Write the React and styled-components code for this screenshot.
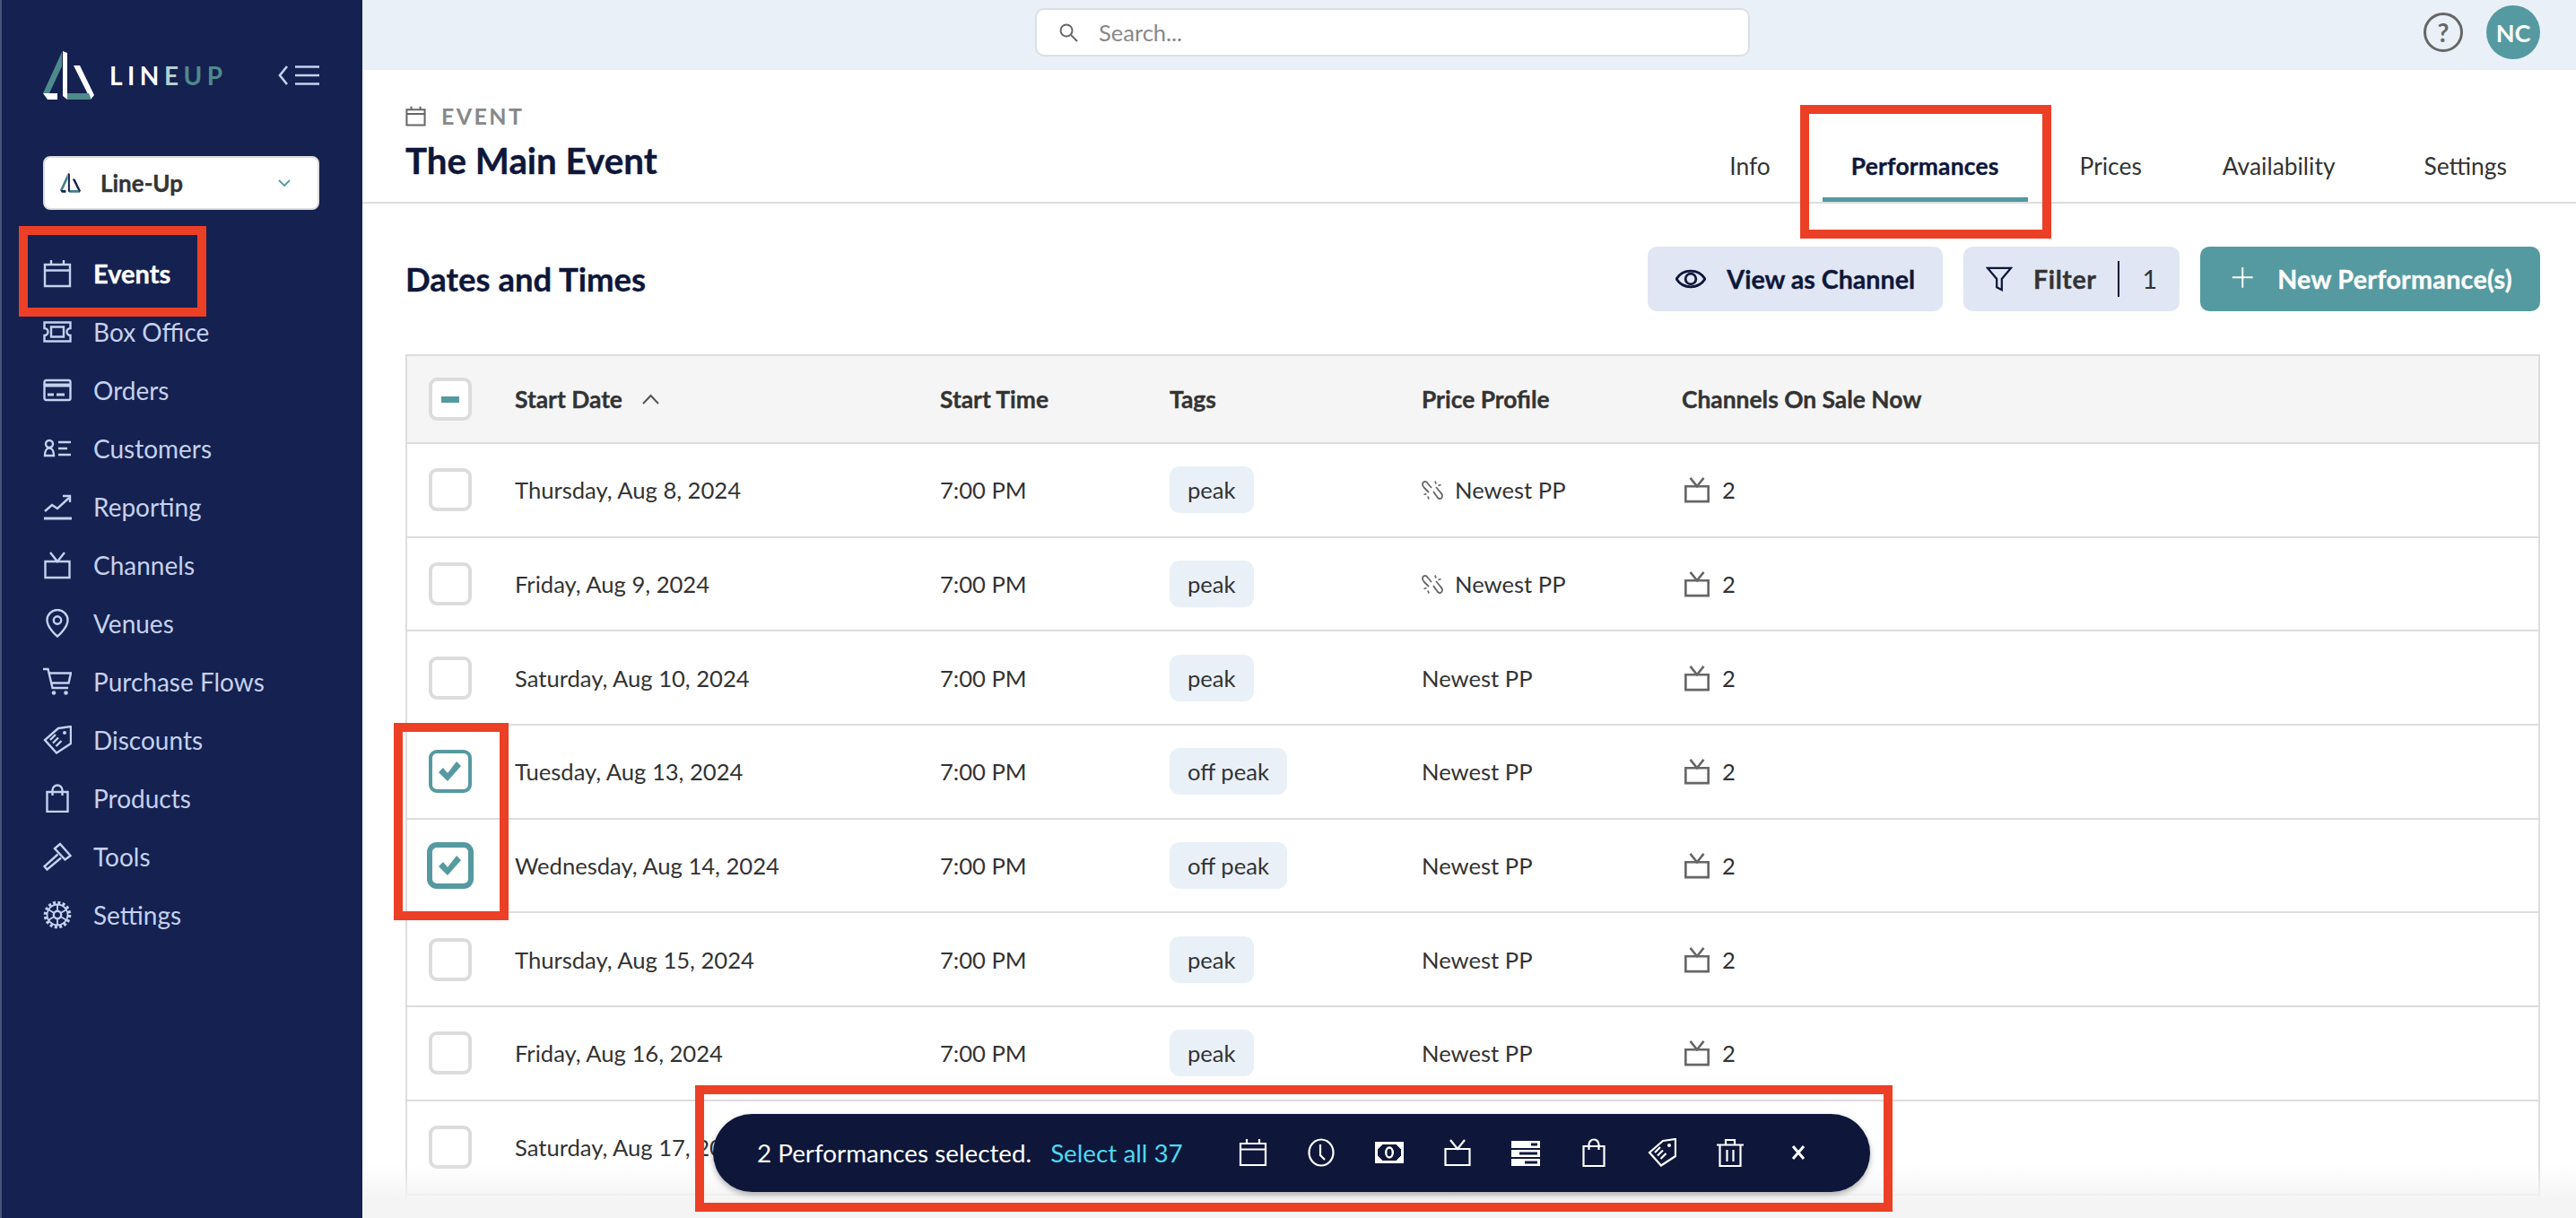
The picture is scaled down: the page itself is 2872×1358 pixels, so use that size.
import React from "react";
import styled, { createGlobalStyle, css } from "styled-components";

const navy = "#0e173a";
const teal = "#559aa1";
const line = "#dddddd";

const heavy = css`
  font-weight: 700;
  -webkit-text-stroke: 0.35px currentColor;
`;

const GlobalStyle = createGlobalStyle`
  * { box-sizing: border-box; }
  html, body { margin: 0; padding: 0; background: #fff; }
  body { font-family: "Lato", "Noto Sans", sans-serif; color: #333; }
`;

const Glyph = ({ size = 32, children, weight = 2.4, box = 32 }) => (
  <svg
    width={size}
    height={size}
    viewBox={`0 0 ${box} ${box}`}
    fill="none"
    stroke="currentColor"
    strokeWidth={weight}
    style={{ flex: "none", display: "block" }}
  >
    {children}
  </svg>
);

const CalendarPaths = (
  <>
    <path d="M2 6h28v24H2z" />
    <path d="M2 12.5h28M9 1v5M23 1v5" />
  </>
);
const TvPaths = (
  <>
    <path d="M2.5 12h27v18h-27z" />
    <path d="M8 2l8 10 8-10" />
  </>
);
const BagPaths = (
  <>
    <path d="M4.5 9h23v22h-23z" />
    <path d="M10.5 13V7a5.5 5.5 0 0 1 11 0v6" />
  </>
);
const TagPaths = (
  <>
    <path d="M17 3l14-2v19L15 30.5 2 16z" />
    <circle cx="24" cy="8" r="2" fill="currentColor" stroke="none" />
    <path d="M8 16l6-6M11 19.5l6-6M14.5 23l6-6" />
  </>
);

const navIcons = {
  calendar: CalendarPaths,
  ticket: (
    <>
      <path d="M1.5 5.5h29V12a4 4 0 0 0 0 8v6.5h-29V20a4 4 0 0 0 0-8z" />
      <path d="M9 10.5h14v11H9z" />
    </>
  ),
  card: (
    <>
      <rect x="1.5" y="5" width="29" height="22" rx="2" />
      <path d="M2 10.5h28" strokeWidth="4" />
      <path d="M5 21h7M15 21h9" strokeWidth="3" />
    </>
  ),
  customers: (
    <>
      <circle cx="7" cy="11" r="4" />
      <path d="M2 24c0-5 2-8.500 5-8.500s5 3.500 5 8.500z" />
      <path d="M17 9h14M17 16h10M17 23h14" />
    </>
  ),
  chart: (
    <>
      <path d="M1 29h31" strokeWidth="3" />
      <path d="M2 21l8-7 6 4 13-12" />
      <path d="M22 4h8v7" />
    </>
  ),
  tv: TvPaths,
  pin: (
    <>
      <path d="M16 30.500S4.500 21 4.500 12.500a11.500 11.500 0 0 1 23 0C27.500 21 16 30.500 16 30.500z" />
      <circle cx="16" cy="12.500" r="4.200" />
    </>
  ),
  cart: (
    <>
      <path d="M0 2h5.500l5 21H28" />
      <path d="M7 6.500h24l-2.500 11H9.500" />
      <circle cx="12" cy="28.500" r="2.300" fill="currentColor" stroke="none" />
      <circle cx="25.500" cy="28.500" r="2.300" fill="currentColor" stroke="none" />
    </>
  ),
  tag: TagPaths,
  bag: BagPaths,
  hammer: (
    <>
      <path d="M13 7l6-5 11.500 13-6 4.500z" />
      <path d="M16.500 13.500L1.500 27l3 3.500L20 17.500" />
    </>
  ),
  gear: (
    <>
      <circle cx="16" cy="16" r="13.500" strokeWidth="3.600" strokeDasharray="3 2.300" />
      <circle cx="16" cy="16" r="11.500" strokeWidth="1.800" />
      <circle cx="16" cy="16" r="4.200" />
      <path d="M16 5v7M16 20v7M6.500 10.500l6 3.500M19.500 18l6 3.500M25.500 10.500l-6 3.500M12.500 18l-6 3.500" strokeWidth="1.800" />
    </>
  ),
};

const barIcons = [
  CalendarPaths,
  <>
    <ellipse cx="16" cy="16" rx="13.500" ry="14.500" />
    <path d="M15 7v12l5 5" />
  </>,
  <>
    <path d="M1.500 5.500h29v21h-29z" strokeWidth="3" />
    <ellipse cx="16" cy="16" rx="3.800" ry="5.500" strokeWidth="2.400" />
    <path d="M3 7h5L3 12zM29 7h-5l5 5zM3 25h5l-5-5zM29 25h-5l5-5z" fill="currentColor" strokeWidth="1" />
  </>,
  TvPaths,
  <>
    <path d="M0 3h32v8H0z" fill="currentColor" stroke="none" />
    <path d="M0 13h32v8H0z" fill="currentColor" stroke="none" />
    <path d="M0 23h32v8H0z" fill="currentColor" stroke="none" />
    <path d="M22 5.500h7v3h-7zM9 15.500h20v3H9zM15 25.500h14v3H15z" fill={navy} stroke="none" />
  </>,
  BagPaths,
  TagPaths,
  <>
    <path d="M1 7.500h30M11 7V2h10v5" />
    <path d="M4.500 8v23h23V8" />
    <path d="M12.500 13v13M19.500 13v13" />
  </>,
  <path d="M10 9l12 14M22 9L10 23" strokeWidth="3" />,
];

const SailMark = ({ width, a, b }) => (
  <svg width={width} viewBox="0 0 57 54" style={{ display: "block", flex: "none" }}>
    <path d="M21 1L0 47h7l14-30z" fill={a} />
    <path d="M0 47h16v7H5z" fill={b} />
    <path d="M22 0l5 2v52l-5-4z" fill={b} />
    <path d="M34 16h7l16 33-4 5z" fill={b} />
    <path d="M27 47h24l3 7H27z" fill={a} />
  </svg>
);

const navItems = [
  ["calendar", "Events"],
  ["ticket", "Box Office"],
  ["card", "Orders"],
  ["customers", "Customers"],
  ["chart", "Reporting"],
  ["tv", "Channels"],
  ["pin", "Venues"],
  ["cart", "Purchase Flows"],
  ["tag", "Discounts"],
  ["bag", "Products"],
  ["hammer", "Tools"],
  ["gear", "Settings"],
];

const rows = [
  ["Thursday, Aug 8, 2024", "peak", true, false],
  ["Friday, Aug 9, 2024", "peak", true, false],
  ["Saturday, Aug 10, 2024", "peak", false, false],
  ["Tuesday, Aug 13, 2024", "off peak", false, true],
  ["Wednesday, Aug 14, 2024", "off peak", false, "focus"],
  ["Thursday, Aug 15, 2024", "peak", false, false],
  ["Friday, Aug 16, 2024", "peak", false, false],
  ["Saturday, Aug 17, 2024", "peak", false, false],
];

const tabs = ["Info", "Performances", "Prices", "Availability", "Settings"];

const App = () => (
  <Page>
    <GlobalStyle />
    <Sidebar>
      <LogoRow>
        <SailMark width={57} a="#4e8a8c" b="#ffffff" />
        <Wordmark>
          LIN<span>E</span>
          <b>UP</b>
        </Wordmark>
        <Collapse>
          <svg width="46" height="24" viewBox="0 0 46 24" fill="none" stroke="currentColor" strokeWidth="2.600">
            <path d="M10 2L2 12l8 10" />
            <path d="M19 2.500h27M19 12h27M19 21.500h27" />
          </svg>
        </Collapse>
      </LogoRow>
      <OrgSelect>
        <SailMark width={23} a="#3f7f86" b="#152150" />
        <OrgName>Line-Up</OrgName>
        <svg width="14" height="8" viewBox="0 0 14 8" fill="none" stroke={teal} strokeWidth="1.800">
          <path d="M1 1l6 6 6-6" />
        </svg>
      </OrgSelect>
      <Nav>
        {navItems.map(([icon, label], i) => (
          <NavItem key={label} $active={i === 0}>
            <NavIcon>
              <Glyph>{navIcons[icon]}</Glyph>
            </NavIcon>
            {label}
          </NavItem>
        ))}
      </Nav>
    </Sidebar>

    <Main>
      <Topbar>
        <Search>
          <svg width="22" height="22" viewBox="0 0 22 22" fill="none" stroke="#666" strokeWidth="2">
            <circle cx="9" cy="9" r="6.500" />
            <path d="M14 14l7 7" />
          </svg>
          Search...
        </Search>
        <Help>?</Help>
        <Avatar>NC</Avatar>
      </Topbar>

      <Header>
        <TitleBlock>
          <Kicker>
            <Glyph size={23} weight={2.800}>
              {CalendarPaths}
            </Glyph>
            EVENT
          </Kicker>
          <Title>The Main Event</Title>
        </TitleBlock>
        <Tabs>
          {tabs.map((tab) => (
            <Tab key={tab} $active={tab === "Performances"}>
              {tab}
            </Tab>
          ))}
        </Tabs>
      </Header>

      <Content>
        <SectionHead>
          <SectionTitle>Dates and Times</SectionTitle>
          <Actions>
            <Button>
              <Glyph size={34} weight={2.600}>
                <path d="M1 16C8 5 24 5 31 16 24 27 8 27 1 16z" />
                <circle cx="16" cy="16" r="5.500" />
              </Glyph>
              View as Channel
            </Button>
            <Button $tone="filter">
              <Glyph size={30} weight={2.400}>
                <path d="M2 3h28L19 16v13l-6-3V16z" />
              </Glyph>
              <FilterLabel>Filter</FilterLabel>
              <FilterCount>1</FilterCount>
            </Button>
            <Button $tone="primary">
              <Glyph size={28} weight={2.200}>
                <path d="M14 1v26M1 14h26" />
              </Glyph>
              New Performance(s)
            </Button>
          </Actions>
        </SectionHead>

        <Table>
          <HeadRow>
            <CheckCell>
              <Check>
                <Dash />
              </Check>
            </CheckCell>
            <DateCell>
              Start Date
              <svg width="19" height="12" viewBox="0 0 19 12" fill="none" stroke="#555" strokeWidth="2">
                <path d="M1 11l8.500-9L18 11" />
              </svg>
            </DateCell>
            <TimeCell>Start Time</TimeCell>
            <TagCell>Tags</TagCell>
            <PriceCell>Price Profile</PriceCell>
            <ChannelCell>Channels On Sale Now</ChannelCell>
          </HeadRow>
          {rows.map(([date, tag, linked, checked]) => (
            <Row key={date}>
              <CheckCell>
                <Check $on={!!checked} $focus={checked === "focus"}>
                  {checked && (
                    <svg width="26" height="24" viewBox="0 0 26 24" fill={teal}>
                      <path d="M0 13l5-5 5 6L20 1l5 5-15 17z" />
                    </svg>
                  )}
                </Check>
              </CheckCell>
              <DateCell>{date}</DateCell>
              <TimeCell>7:00 PM</TimeCell>
              <TagCell>
                <TagPill>{tag}</TagPill>
              </TagCell>
              <PriceCell>
                {linked && (
                  <LinkIcon>
                    <svg width="24" height="22" viewBox="0 0 24 22" fill="none" stroke="#666" strokeWidth="1.800">
                      <path d="M11 9L6 3C4 1 1 2 1 5c0 2 1 3 2 4l5 5" />
                      <path d="M13 13l5 7c2 2 5 1 5-2 0-2-1-3-2-4l-5-6" />
                      <path d="M15 1.500l1 3M18.500 6.500l3-1M2.500 16.500l3-1M7 18.500l1 3" />
                    </svg>
                  </LinkIcon>
                )}
                Newest PP
              </PriceCell>
              <ChannelCell>
                <TvIcon>
                  <Glyph size={30} weight={2.800}>
                    {TvPaths}
                  </Glyph>
                </TvIcon>
                2
              </ChannelCell>
            </Row>
          ))}
        </Table>
      </Content>
    </Main>

    <BottomFade />

    <SelectionBar>
      <SelectionText>2 Performances selected.</SelectionText>
      <SelectAll>Select all 37</SelectAll>
      <BarIcons>
        {barIcons.map((paths, i) => (
          <Glyph key={i} size={32} weight={2.200}>
            {paths}
          </Glyph>
        ))}
      </BarIcons>
    </SelectionBar>

    <EventsMark />
    <TabMark />
    <ChecksMark />
    <BarMark />
  </Page>
);

const Page = styled.div`
  position: relative;
  display: flex;
  width: 2872px;
  height: 1358px;
  overflow: hidden;
  background: #fff;
`;

const Sidebar = styled.aside`
  flex: none;
  width: 404px;
  background: #152150;
  border-left: 2px solid #48527c;
  padding: 57px 48px 0 46px;
  display: flex;
  flex-direction: column;
`;

const LogoRow = styled.div`
  display: flex;
  align-items: center;
  height: 54px;
`;

const Wordmark = styled.div`
  margin-left: 17px;
  font-size: 28px;
  font-weight: 700;
  letter-spacing: 5.500px;
  color: #fff;
  span {
    color: #b4cfd2;
  }
  b {
    color: #4e8a8c;
    font-weight: 700;
  }
`;

const Collapse = styled.div`
  margin-left: auto;
  color: #c5d1ee;
  display: flex;
`;

const OrgSelect = styled.div`
  margin-top: 63px;
  width: 308px;
  height: 60px;
  background: #fff;
  border: 2px solid #dddddd;
  border-radius: 8px;
  display: flex;
  align-items: center;
  padding: 0 30px 0 17px;
`;

const OrgName = styled.span`
  margin-left: 22px;
  margin-right: auto;
  font-size: 26px;
  ${heavy}
  color: #333;
`;

const Nav = styled.nav`
  margin-top: 38px;
  display: flex;
  flex-direction: column;
`;

const NavItem = styled.div`
  height: 65px;
  display: flex;
  align-items: center;
  gap: 24px;
  font-size: ${(p) => (p.$active ? "29px" : "28px")};
  ${(p) => (p.$active ? heavy : "font-weight: 400;")}
  color: ${(p) => (p.$active ? "#fff" : "#c5d1ee")};
`;

const NavIcon = styled.span`
  display: flex;
  color: #c5d1ee;
`;

const Main = styled.main`
  flex: 1;
  min-width: 0;
  display: flex;
  flex-direction: column;
`;

const Topbar = styled.header`
  flex: none;
  height: 78px;
  background: #e9f0f8;
  display: flex;
  align-items: center;
  padding: 0 40px 6px 750px;
`;

const Search = styled.div`
  width: 797px;
  height: 54px;
  margin-right: auto;
  background: #fff;
  border: 2px solid #dcdfe4;
  border-radius: 10px;
  display: flex;
  align-items: center;
  gap: 23px;
  padding-left: 24px;
  font-size: 25.500px;
  color: #888;
`;

const Help = styled.div`
  width: 44px;
  height: 44px;
  border: 3.500px solid #666;
  border-radius: 50%;
  display: flex;
  align-items: center;
  justify-content: center;
  font-size: 28px;
  font-weight: 700;
  color: #666;
`;

const Avatar = styled.div`
  margin-left: 26px;
  width: 60px;
  height: 60px;
  border-radius: 50%;
  background: ${teal};
  color: #fff;
  display: flex;
  align-items: center;
  justify-content: center;
  font-size: 27px;
  font-weight: 700;
`;

const Header = styled.div`
  flex: none;
  height: 149px;
  border-bottom: 2px solid ${line};
  display: flex;
  justify-content: space-between;
  padding: 38px 45px 0 48px;
`;

const TitleBlock = styled.div`
  display: flex;
  flex-direction: column;
`;

const Kicker = styled.div`
  display: flex;
  align-items: center;
  gap: 17px;
  font-size: 25px;
  line-height: 26px;
  font-weight: 700;
  letter-spacing: 2.400px;
  color: #888;
  svg {
    color: #666;
  }
`;

const Title = styled.h1`
  margin: 13px 0 0;
  font-size: 40.300px;
  line-height: 48px;
  ${heavy}
  color: ${navy};
`;

const Tabs = styled.div`
  align-self: flex-end;
  display: flex;
  gap: 26px;
`;

const Tab = styled.div`
  padding: 0 32px 18px;
  font-size: 26.400px;
  line-height: 34px;
  ${(p) => (p.$active ? heavy : "font-weight: 400;")}
  letter-spacing: ${(p) => (p.$active ? "0.2px" : "0")};
  color: ${(p) => (p.$active ? navy : "#333")};
  border-bottom: 5px solid ${(p) => (p.$active ? teal : "transparent")};
  &:last-child {
    margin-left: 9px;
  }
`;

const Content = styled.div`
  flex: 1;
  min-height: 0;
  padding: 48px 40px 0 48px;
`;

const SectionHead = styled.div`
  display: flex;
  align-items: center;
  justify-content: space-between;
`;

const SectionTitle = styled.h2`
  margin: 0;
  font-size: 36.500px;
  ${heavy}
  color: ${navy};
`;

const Actions = styled.div`
  display: flex;
  gap: 23px;
`;

const tones = {
  plain: { bg: "#e0e6f4", fg: navy, pad: "0 31px", track: "0" },
  filter: { bg: "#e0e6f4", fg: "#333", pad: "0 25px", track: "0" },
  primary: { bg: teal, fg: "#fff", pad: "0 31px 0 35px", track: "0.3px" },
};

const Button = styled.div`
  height: 72px;
  display: flex;
  align-items: center;
  gap: 23px;
  padding: ${(p) => tones[p.$tone || "plain"].pad};
  border-radius: 10px;
  font-size: 28.600px;
  letter-spacing: ${(p) => tones[p.$tone || "plain"].track};
  ${heavy}
  background: ${(p) => tones[p.$tone || "plain"].bg};
  color: ${(p) => tones[p.$tone || "plain"].fg};
  svg {
    color: ${(p) => (p.$tone === "primary" ? "#fff" : navy)};
  }
`;

const FilterLabel = styled.span`
  letter-spacing: 0.600px;
`;

const FilterCount = styled.span`
  padding-left: 26px;
  height: 40px;
  line-height: 40px;
  border-left: 2px solid ${navy};
  font-weight: 400;
  -webkit-text-stroke: 0;
  color: #333;
`;

const Table = styled.div`
  margin-top: 48px;
  height: 960px;
  border: 2px solid ${line};
  border-bottom: none;
`;

const HeadRow = styled.div`
  height: 98px;
  display: flex;
  align-items: center;
  background: #f5f5f5;
  border-bottom: 2px solid ${line};
  font-size: 26.400px;
  ${heavy}
  color: #333;
`;

const Row = styled.div`
  height: 104.700px;
  display: flex;
  align-items: center;
  border-bottom: 2px solid ${line};
  font-size: 25.600px;
  color: #333;
`;

const CheckCell = styled.div`
  flex: none;
  width: 120px;
  padding-left: 24px;
`;

const Check = styled.div`
  width: 48px;
  height: 48px;
  border: 4px solid ${(p) => (p.$on ? teal : "#dcdcdc")};
  border-radius: 9px;
  background: #fff;
  display: flex;
  align-items: center;
  justify-content: center;
  ${(p) => p.$focus && `box-shadow: 0 0 0 2px ${teal};`}
`;

const Dash = styled.div`
  width: 20px;
  height: 7px;
  background: ${teal};
`;

const DateCell = styled.div`
  flex: none;
  width: 474px;
  display: flex;
  align-items: center;
  gap: 22px;
`;

const TimeCell = styled.div`
  flex: none;
  width: 256px;
`;

const TagCell = styled.div`
  flex: none;
  width: 281px;
`;

const TagPill = styled.span`
  display: inline-flex;
  align-items: center;
  height: 52px;
  padding: 0 20px;
  border-radius: 11px;
  background: #e9f0f8;
`;

const PriceCell = styled.div`
  flex: none;
  width: 290px;
  display: flex;
  align-items: center;
`;

const LinkIcon = styled.span`
  display: flex;
  margin-right: 13px;
`;

const ChannelCell = styled.div`
  display: flex;
  align-items: center;
`;

const TvIcon = styled.span`
  display: flex;
  margin: 0 13px 0 2px;
  color: #666;
`;

const BottomFade = styled.div`
  position: absolute;
  left: 404px;
  right: 0;
  bottom: 0;
  height: 60px;
  background: linear-gradient(to bottom, rgba(244, 244, 244, 0), #f4f4f4 70%);
  pointer-events: none;
`;

const SelectionBar = styled.div`
  position: absolute;
  left: 795px;
  top: 1242px;
  width: 1290px;
  height: 87px;
  border-radius: 44px;
  background: ${navy};
  box-shadow: 0 3px 6px rgba(0, 0, 0, 0.3);
  display: flex;
  align-items: center;
  padding-left: 49px;
  font-size: 27.800px;
  color: #fff;
`;

const SelectionText = styled.span`
  white-space: nowrap;
`;

const SelectAll = styled.span`
  margin-left: 21px;
  color: #4fd8ef;
  white-space: nowrap;
`;

const BarIcons = styled.div`
  position: absolute;
  left: 586px;
  top: 27px;
  display: flex;
  gap: 44px;
  color: #fff;
`;

const Mark = styled.div`
  position: absolute;
  border: 10px solid #ec4026;
  pointer-events: none;
`;

const EventsMark = styled(Mark)`
  left: 21px;
  top: 252px;
  width: 209px;
  height: 101px;
`;

const TabMark = styled(Mark)`
  left: 2007px;
  top: 117px;
  width: 280px;
  height: 149px;
`;

const ChecksMark = styled(Mark)`
  left: 439px;
  top: 806px;
  width: 128px;
  height: 220px;
`;

const BarMark = styled(Mark)`
  left: 775px;
  top: 1210px;
  width: 1335px;
  height: 141px;
`;

export default App;
